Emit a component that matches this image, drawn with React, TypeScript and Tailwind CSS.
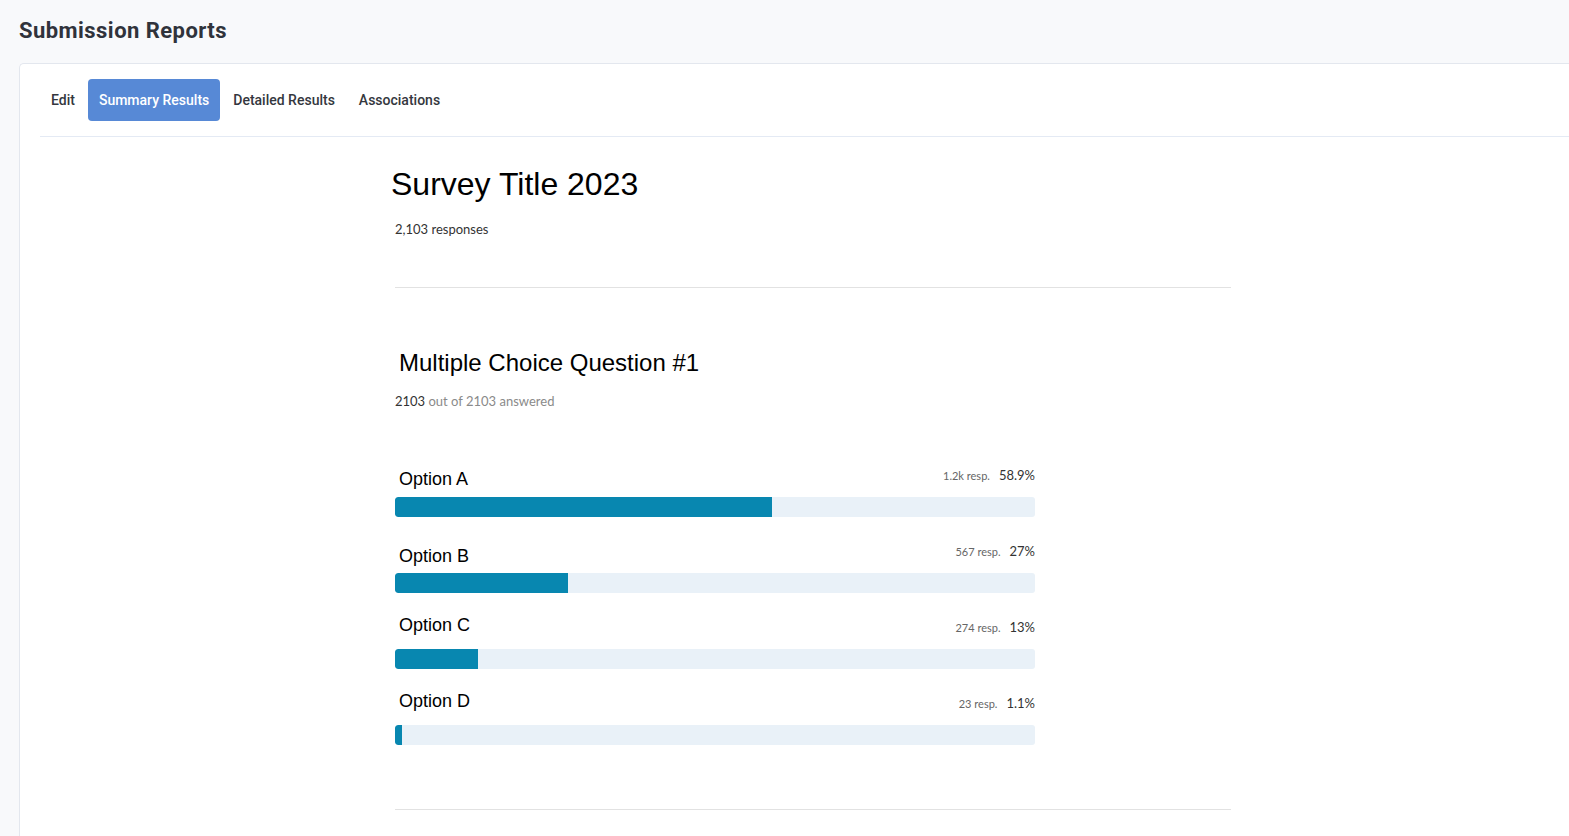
import React from 'react';

type Option = { label: string; resp: string; pct: number; pctLabel: string; labelShift: string };

const options: Option[] = [
  { label: 'Option A', resp: '1.2k resp.', pct: 58.9, pctLabel: '58.9%', labelShift: 'translate-y-[2px]' },
  { label: 'Option B', resp: '567 resp.', pct: 27, pctLabel: '27%', labelShift: 'translate-y-[3px]' },
  { label: 'Option C', resp: '274 resp.', pct: 13, pctLabel: '13%', labelShift: '-translate-y-[4px]' },
  { label: 'Option D', resp: '23 resp.', pct: 1.1, pctLabel: '1.1%', labelShift: '-translate-y-[4px]' },
];

const tabs = ['Edit', 'Summary Results', 'Detailed Results', 'Associations'];

const OptionRow: React.FC<{ option: Option }> = ({ option }) => (
  <div className="h-[76px]">
    <div className="flex items-center justify-between w-[640px] h-[40px]">
      <span className={`ml-1 text-[18px] text-black font-['Liberation_Sans',Arial,sans-serif] ${option.labelShift}`}>
        {option.label}
      </span>
      <div className="flex items-center gap-[9px] font-['Lato',sans-serif] -translate-y-[1px]">
        <span className="text-[11px] text-[#666]">{option.resp}</span>
        <span className="text-[13px] text-[#333]">{option.pctLabel}</span>
      </div>
    </div>
    <div className="w-[640px] h-[20px] rounded-[3px] bg-[#e9f1f8] overflow-hidden">
      <div className="h-full bg-[#0887b0] rounded-l-[3px]" style={{ width: `${option.pct}%` }} />
    </div>
  </div>
);

const App: React.FC = () => {
  return (
    <div className="min-h-screen h-[836px] overflow-hidden bg-[#f8f9fb] font-['Roboto',sans-serif]">
      <h1 className="pl-[19px] pt-[14px] h-[63px] text-[22px] font-bold text-[#30333b] tracking-[0.45px]">
        Submission Reports
      </h1>

      <div className="ml-[19px] bg-white border-l border-t border-[#e3e7ee] rounded-tl-[5px] h-[800px] pl-[20px]">
        {/* Tabs */}
        <div className="flex items-center gap-[2px] pt-[15px] pb-[15px] border-b border-[#e4eaf4]">
          {tabs.map((tab) => (
            <button
              key={tab}
              className={
                tab === 'Summary Results'
                  ? 'h-[42px] px-[11px] rounded-[4px] bg-[#5789d6] text-white text-[14px] font-medium'
                  : 'h-[42px] px-[11px] rounded-[4px] text-[#34373e] text-[14px] font-medium'
              }
            >
              {tab}
            </button>
          ))}
        </div>

        {/* Report */}
        <div className="ml-[355px] w-[836px]">
          <h2 className="-ml-[4px] pt-[27px] text-[32px] leading-[40px] text-black font-['Liberation_Sans',Arial,sans-serif]">
            Survey Title 2023
          </h2>
          <p className="mt-[16px] text-[13px] text-[#333] font-['Lato',sans-serif]">2,103 responses</p>

          <div className="mt-[47px] border-t border-[#e2e2e2]" />

          <h3 className="ml-[4px] mt-[60px] text-[24px] leading-[30px] text-black font-['Liberation_Sans',Arial,sans-serif]">
            Multiple Choice Question #1
          </h3>
          <p className="mt-[14px] text-[13px] font-['Lato',sans-serif]">
            <span className="text-[#333]">2103</span>
            <span className="text-[#8a8a8a]"> out of 2103 answered</span>
          </p>

          <div className="mt-[46px]">
            {options.map((o) => (
              <OptionRow key={o.label} option={o} />
            ))}
          </div>

          <div className="mt-[48px] border-t border-[#e2e2e2]" />
        </div>
      </div>
    </div>
  );
};

export default App;
